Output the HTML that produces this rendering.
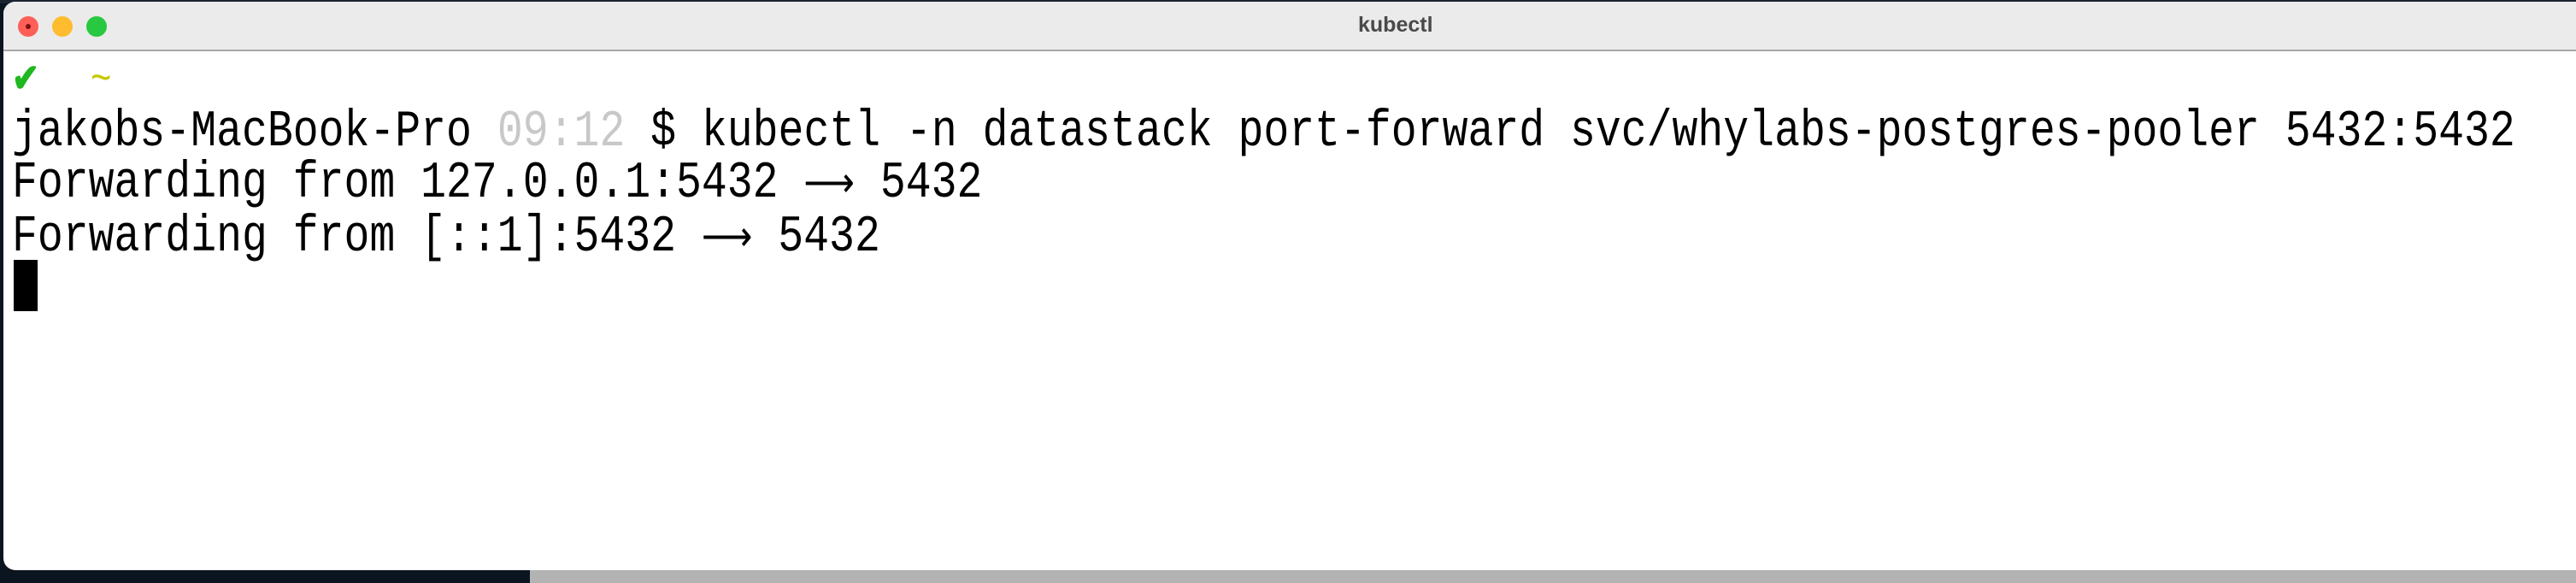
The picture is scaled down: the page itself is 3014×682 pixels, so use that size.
<!DOCTYPE html>
<html><head><style>
body{margin:0;width:3014px;height:682px;overflow:hidden;background:#b3b3b3;position:relative;font-family:"Liberation Mono",monospace}
.dark{position:absolute;left:0;top:0;width:620px;height:682px;background:#0a1520}
.topstrip{position:absolute;left:0;top:0;width:3014px;height:4px;background:#1a2430}
.win{position:absolute;left:4px;top:2px;width:3014px;height:665px;background:#fff;border-radius:14px 0 0 14px;overflow:hidden}
.tb{position:absolute;left:0;top:0;right:0;height:56px;background:#ebebeb;border-bottom:2px solid #a8a8a8}
.dot{position:absolute;top:17px;width:24px;height:24px;border-radius:50%}
.title{position:absolute;left:1585px;top:13px;font-family:"Liberation Sans",sans-serif;font-size:25px;font-weight:bold;color:#4a4a4a}
.term{position:absolute;left:10px;top:60px;font-size:60px;line-height:60px;color:#000;white-space:pre;transform:scaleX(0.83);transform-origin:0 0}
.cur{position:absolute;left:12px;top:302px;width:28px;height:60px;background:#000}
.ar{font-size:50px}
</style></head><body>
<div class="dark"></div><div class="topstrip"></div>
<div class="win">
<div class="tb">
<div class="dot" style="left:17px;background:#fe5f57"><div style="position:absolute;left:9px;top:9px;width:6px;height:6px;border-radius:50%;background:#7a1010"></div></div>
<div class="dot" style="left:57px;background:#febc2e"></div>
<div class="dot" style="left:97px;background:#28c840"></div>
<div class="title">kubectl</div>
</div>
<div class="term"><span style="color:#1fb81f;font-weight:bold;font-size:46px">✔</span>  <span style="color:#c8c800;font-size:50px">~</span>
jakobs-MacBook-Pro <span style="color:#c8c8c8">09:12</span> $ kubectl -n datastack port-forward svc/whylabs-postgres-pooler 5432:5432
Forwarding from 127.0.0.1:5432 <span class="ar">⟶</span> 5432
Forwarding from [::1]:5432 <span class="ar">⟶</span> 5432</div>
<div class="cur"></div>
</div>
</body></html>
